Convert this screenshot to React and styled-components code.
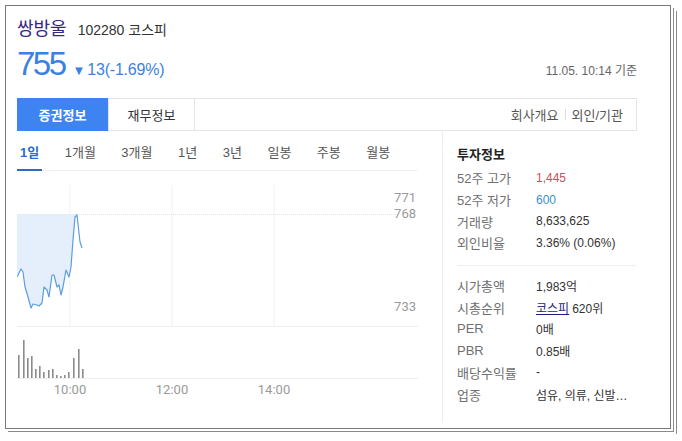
import React from 'react';
import styled, { createGlobalStyle } from 'styled-components';

const GlobalStyle = createGlobalStyle`
  body {
    margin: 0;
    background: #fff;
    font-family: "Liberation Sans", "Noto Sans CJK KR", sans-serif;
    color: #333;
  }
`;

const KR = `"Liberation Sans", "Noto Sans CJK KR", sans-serif`;

const Frame = styled.div`
  box-sizing: border-box;
  width: 666px;
  height: 424px;
  margin: 5px;
  padding: 11px 33px 0 11px;
  border: 1px solid #7a7a7a;
  background: #fff;
  box-shadow: 2px 2px 0 0 #fff, 3px 3px 0 0 #8a8a8a, 5px 5px 0 0 #fff, 6px 6px 0 0 #8a8a8a;
  display: flex;
  flex-direction: column;
`;

const TitleRow = styled.div`
  display: flex;
  align-items: baseline;
  gap: 11px;
  height: 24px;
  line-height: 24px;
`;

const Name = styled.span`
  font-family: ${KR};
  font-size: 18px;
  color: #35267f;
`;

const Code = styled.span`
  font-family: ${KR};
  font-size: 14px;
  color: #333;
`;

const PriceRow = styled.div`
  display: flex;
  align-items: baseline;
  height: 45px;
`;

const Price = styled.span`
  font-size: 33px;
  letter-spacing: -2.5px;
  color: #3b82e0;
  line-height: 45px;
`;

const Change = styled.span`
  margin-left: 8px;
  font-size: 16px;
  color: #3b82e0;
  letter-spacing: -0.2px;
  display: flex;
  align-items: baseline;
  gap: 2px;
`;

const Arrow = styled.span`
  font-size: 13px;
`;

const Stamp = styled.span`
  margin-left: auto;
  font-size: 12px;
  color: #666;
  font-family: ${KR};
`;

const TabBar = styled.div`
  margin-top: 12px;
  box-sizing: border-box;
  height: 33px;
  display: flex;
  border: 1px solid #e4e4e4;
  border-left: none;
`;

const Tab = styled.div`
  box-sizing: border-box;
  width: ${({ $w }) => $w}px;
  display: flex;
  align-items: center;
  justify-content: center;
  font-family: ${KR};
  font-size: 13px;
  font-weight: ${({ $active }) => ($active ? 700 : 400)};
  color: ${({ $active }) => ($active ? '#fff' : '#333')};
  background: ${({ $active }) => ($active ? '#3d84f0' : '#fff')};
  border-right: 1px solid #e4e4e4;
  margin-top: ${({ $active }) => ($active ? '-1px' : '0')};
  margin-bottom: ${({ $active }) => ($active ? '-1px' : '0')};
`;

const SideLinks = styled.div`
  margin-left: auto;
  padding-right: 13px;
  display: flex;
  align-items: center;
  gap: 6px;
  font-family: ${KR};
  font-size: 13px;
  color: #555;
`;

const Sep = styled.span`
  width: 1px;
  height: 11px;
  background: #ddd;
`;

const Body = styled.div`
  flex: 1;
  display: grid;
  grid-template-columns: 401px 194px;
  column-gap: 24px;
`;

const ChartCol = styled.div`
  display: flex;
  flex-direction: column;
`;

const Periods = styled.div`
  box-sizing: border-box;
  height: 40px;
  display: flex;
  gap: 19.5px;
  border-bottom: 1px solid #f0f0f0;
`;

const Period = styled.div`
  padding: 2px 3px 0;
  display: flex;
  align-items: center;
  font-family: ${KR};
  font-size: 13px;
  font-weight: ${({ $active }) => ($active ? 700 : 400)};
  color: ${({ $active }) => ($active ? '#2b6cc4' : '#555')};
  border-bottom: 2px solid ${({ $active }) => ($active ? '#2b6cc4' : 'transparent')};
  margin-bottom: -1px;
`;

const InfoCol = styled.div`
  border-left: 1px solid #eeeeee;
  padding: 15px 0 0 14px;
  margin-bottom: 6px;
`;

const InfoTitle = styled.div`
  font-family: ${KR};
  font-size: 13px;
  font-weight: 700;
  color: #222;
  line-height: 18px;
`;

const Group = styled.div`
  padding: ${({ $first }) => ($first ? '3px 0 11px' : '9px 0 0')};
  border-bottom: ${({ $first }) => ($first ? '1px solid #eee' : 'none')};
`;

const Row = styled.div`
  display: flex;
  height: 21.7px;
  align-items: center;
  font-family: ${KR};
  font-size: 12px;
`;

const Label = styled.span`
  width: 79px;
  color: #707070;
  font-size: 13px;
`;

const Value = styled.span`
  color: ${({ $tone }) => ($tone === 'up' ? '#c8505a' : $tone === 'down' ? '#3a8fcf' : '#333')};
`;

const LinkText = styled.span`
  color: #1d1d7a;
  text-decoration: underline;
  margin-right: 3px;
`;

const line = [
  [0, 106], [4, 98], [6, 101], [8, 116], [11, 126], [14, 137], [16, 133], [20, 134],
  [22, 135], [25, 132], [27, 116], [30, 119], [32, 126], [35, 104], [37, 104], [40, 116],
  [42, 114], [44, 124], [46, 116], [49, 99], [52, 106], [54, 96], [56, 69], [58, 46],
  [60, 44], [63, 71], [65, 77],
];

const bars = [
  [1, 184], [6, 169], [10, 187], [14, 185], [18, 198], [22, 195], [26, 201], [31, 199],
  [35, 198], [39, 204], [43, 205], [47, 204], [51, 201], [56, 187], [61, 178], [65, 198],
];

const Chart = () => {
  const pts = line.map((p) => p.join(',')).join(' ');
  const fill = line.slice(0, 25).map((p) => p.join(',')).join(' ') + ' 60,43 0,43';
  const axis = { fontFamily: 'Roboto, "Liberation Sans", sans-serif', fontSize: 13, fill: '#9a9a9a' };
  return (
    <svg width="401" height="230" viewBox="0 0 401 230">
      {[53, 155, 257].map((x) => (
        <line key={x} x1={x} y1={14} x2={x} y2={155} stroke="#f1f1f1" strokeWidth="1" />
      ))}
      <line x1="0" y1="43.5" x2="380" y2="43.5" stroke="#e2e2e2" strokeDasharray="1 1" />
      <line x1="0" y1="155.5" x2="401" y2="155.5" stroke="#efefef" />
      <line x1="0" y1="207.5" x2="401" y2="207.5" stroke="#efefef" />
      <polygon points={fill} fill="#e5effb" />
      <polyline points={pts} fill="none" stroke="#5b9de2" strokeWidth="1.2" strokeLinejoin="round" />
      {bars.map(([x, y]) => (
        <rect key={x} x={x} y={y} width="1.6" height={207 - y} fill="#8c8c8c" />
      ))}
      <text x="399" y="31" textAnchor="end" style={axis}>771</text>
      <text x="399" y="47" textAnchor="end" style={axis}>768</text>
      <text x="399" y="140" textAnchor="end" style={axis}>733</text>
      <text x="53" y="223" textAnchor="middle" style={axis}>10:00</text>
      <text x="155" y="223" textAnchor="middle" style={axis}>12:00</text>
      <text x="257" y="223" textAnchor="middle" style={axis}>14:00</text>
    </svg>
  );
};

const periods = ['1일', '1개월', '3개월', '1년', '3년', '일봉', '주봉', '월봉'];

export default function App() {
  return (
    <>
      <GlobalStyle />
      <Frame>
        <TitleRow>
          <Name>쌍방울</Name>
          <Code>102280 코스피</Code>
        </TitleRow>
        <PriceRow>
          <Price>755</Price>
          <Change>
            <Arrow>▼</Arrow>13(-1.69%)
          </Change>
          <Stamp>11.05. 10:14 기준</Stamp>
        </PriceRow>
        <TabBar>
          <Tab $w={92} $active>증권정보</Tab>
          <Tab $w={86}>재무정보</Tab>
          <SideLinks>
            회사개요<Sep />외인/기관
          </SideLinks>
        </TabBar>
        <Body>
          <ChartCol>
            <Periods>
              {periods.map((p, i) => (
                <Period key={p} $active={i === 0}>{p}</Period>
              ))}
            </Periods>
            <Chart />
          </ChartCol>
          <InfoCol>
            <InfoTitle>투자정보</InfoTitle>
            <Group $first>
              <Row><Label>52주 고가</Label><Value $tone="up">1,445</Value></Row>
              <Row><Label>52주 저가</Label><Value $tone="down">600</Value></Row>
              <Row><Label>거래량</Label><Value>8,633,625</Value></Row>
              <Row><Label>외인비율</Label><Value>3.36% (0.06%)</Value></Row>
            </Group>
            <Group>
              <Row><Label>시가총액</Label><Value>1,983억</Value></Row>
              <Row><Label>시총순위</Label><Value><LinkText>코스피</LinkText>620위</Value></Row>
              <Row><Label>PER</Label><Value>0배</Value></Row>
              <Row><Label>PBR</Label><Value>0.85배</Value></Row>
              <Row><Label>배당수익률</Label><Value>-</Value></Row>
              <Row><Label>업종</Label><Value>섬유, 의류, 신발…</Value></Row>
            </Group>
          </InfoCol>
        </Body>
      </Frame>
    </>
  );
}
